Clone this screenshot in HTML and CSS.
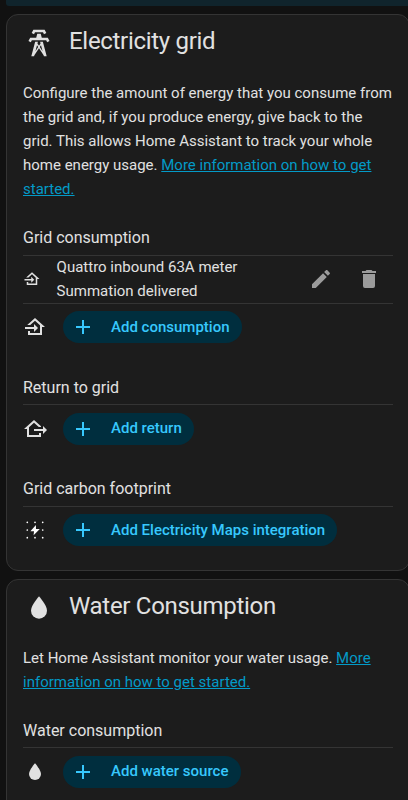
FILE: index.html
```html
<!DOCTYPE html>
<html lang="en">
<head>
<meta charset="utf-8">
<title>Energy configuration</title>
<link rel="stylesheet" href="styles.css">
</head>
<body>
<svg class="defs" aria-hidden="true">
  <symbol id="plus" viewBox="0 0 24 24"><path d="M19,13H13V19H11V13H5V11H11V5H13V11H19V13Z"/></symbol>
  <symbol id="water" viewBox="0 0 24 24"><path d="M12,20A6,6 0 0,1 6,14C6,10 12,3.25 12,3.25C12,3.25 18,10 18,14A6,6 0 0,1 12,20Z"/></symbol>
  <symbol id="import" viewBox="0 0 24 24"><path d="M15 13L11 17V14H2V12H11V9L15 13M5 20V16H7V18H17V10.19L12 5.69L7.21 10H4.22L12 3L22 12H19V20H5Z"/></symbol>
</svg>
<div class="banner"></div>
<main>
  <section class="card">
    <h1><svg class="head-icon" viewBox="0 0 24 24"><path d="M8.28,5.45L6.5,4.55L7.76,2H16.23L17.5,4.55L15.72,5.44L15,4H9L8.28,5.45M18.62,8H14.09L13.3,5H10.7L9.91,8H5.38L4.1,10.55L5.89,11.44L6.62,10H17.38L18.1,11.45L19.89,10.56L18.62,8M17.77,22H15.7L15.46,21.1L12,15.9L8.53,21.1L8.3,22H6.23L9.12,11H11.19L10.83,12.35L12,14.1L13.16,12.35L12.81,11H14.88L17.77,22M11.4,15L10.5,13.65L9.32,18.13L11.4,15M14.68,18.12L13.5,13.64L12.6,15L14.68,18.12Z"/></svg><span>Electricity grid</span></h1>
    <p>Configure the amount of energy that you consume from the grid and, if you produce energy, give back to the grid. This allows Home Assistant to track your whole home energy usage. <a href="#">More information on how to get started.</a></p>

    <h2>Grid consumption</h2>
    <div class="row source">
      <svg class="small-icon"><use href="#import"/></svg>
      <span class="name">Quattro inbound 63A meter Summation delivered</span>
      <svg class="action" viewBox="0 0 24 24"><path d="M20.71,7.04C21.1,6.65 21.1,6 20.71,5.63L18.37,3.29C18,2.9 17.35,2.9 16.96,3.29L15.12,5.12L18.87,8.87M3,17.25V21H6.75L17.81,9.93L14.06,6.18L3,17.25Z"/></svg>
      <svg class="action" viewBox="0 0 24 24"><path d="M19,4H15.5L14.5,3H9.5L8.5,4H5V6H19M6,19A2,2 0 0,0 8,21H16A2,2 0 0,0 18,19V7H6V19Z"/></svg>
    </div>
    <div class="row">
      <svg class="icon"><use href="#import"/></svg>
      <button><svg class="plus"><use href="#plus"/></svg><span>Add consumption</span></button>
    </div>

    <h2>Return to grid</h2>
    <div class="row">
      <svg class="icon" viewBox="0 0 24 24"><path d="M24 13L20 17V14H11V12H20V9L24 13M4 20V12H1L11 3L18 9.3V10H15.79L11 5.69L6 10.19V18H16V16H18V20H4Z"/></svg>
      <button><svg class="plus"><use href="#plus"/></svg><span>Add return</span></button>
    </div>

    <h2 class="tall">Grid carbon footprint</h2>
    <div class="row">
      <svg class="icon maps" viewBox="0 0 24 24">
        <circle cx="4.3" cy="4.3" r=".85"/><circle cx="12" cy="4.3" r=".85"/><circle cx="19.7" cy="4.3" r=".85"/>
        <circle cx="4.3" cy="12" r=".85"/><circle cx="19.7" cy="12" r=".85"/>
        <circle cx="4.3" cy="19.7" r=".85"/><circle cx="12" cy="19.7" r=".85"/><circle cx="19.7" cy="19.7" r=".85"/>
        <path d="M12.9 7L7.4 13.2H11L10.6 17.2L16.8 11H13Z"/>
      </svg>
      <button><svg class="plus"><use href="#plus"/></svg><span>Add Electricity Maps integration</span></button>
    </div>
  </section>

  <section class="card">
    <h1><svg class="head-icon"><use href="#water"/></svg><span>Water Consumption</span></h1>
    <p>Let Home Assistant monitor your water usage. <a href="#">More information on how to get started.</a></p>
    <h2 class="last">Water consumption</h2>
    <div class="row">
      <svg class="icon"><use href="#water"/></svg>
      <button><svg class="plus"><use href="#plus"/></svg><span>Add water source</span></button>
    </div>
  </section>
</main>
</body>
</html>
```
FILE: styles.css
```css
* { box-sizing: border-box; }
html { overflow: hidden; }
body {
  margin: 0;
  height: 800px;
  overflow: hidden;
  background: #111;
  color: #e1e1e1;
  font: 15px/24px Roboto, sans-serif;
}
svg { flex: none; fill: currentColor; }
.defs { display: none; }
.banner { height: 6px; margin-left: 6px; background: #10242c; border-bottom-left-radius: 3px; }
main { width: 404px; margin: 8px 0 0 6px; }
.card {
  margin-bottom: 8px;
  padding: 0 16px 16px;
  border: 1px solid #343434;
  border-radius: 12px;
  background: #1c1c1c;
}
h1 {
  display: flex;
  align-items: center;
  gap: 14px;
  height: 50px;
  margin: 0 0 16px;
  font-size: 24px;
  font-weight: 400;
  line-height: 48px;
  letter-spacing: -0.3px;
}
h1 span { padding-top: 2px; }
.head-icon { width: 32px; height: 32px; margin-top: 6px; }
p { margin: 0; }
a { color: #039ac7; }
h2 {
  height: 54px;
  margin: 0;
  padding-top: 25px;
  font-size: 16px;
  font-weight: 400;
}
.row + h2 { height: 53.4px; }
.row + h2.tall { height: 53.6px; }
h2.last { height: 53.4px; }
.row {
  display: flex;
  align-items: center;
  height: 48px;
  padding-bottom: 0.6px;
  border-top: 1px solid #343434;
}
.source { padding-bottom: 1px; }
.icon { width: 24px; height: 24px; margin-right: 16px; }
.maps { fill: #fff; }
.small-icon { width: 18px; height: 18px; margin-right: 15.6px; }
.name { width: 216px; margin-right: 36.4px; }
.action { width: 24px; height: 24px; margin-right: 24px; color: #9b9b9b; }
.action:last-child { margin-right: 12px; }
button {
  display: flex;
  align-items: center;
  gap: 16px;
  height: 32px;
  padding: 0 12.3px 0 8px;
  border: 0;
  border-radius: 16px;
  background: #002e3e;
  color: #37c8fd;
  font: 500 15px/24px Roboto, sans-serif;
}
button span { padding-bottom: 0.5px; }
.plus { width: 24px; height: 24px; }
```
